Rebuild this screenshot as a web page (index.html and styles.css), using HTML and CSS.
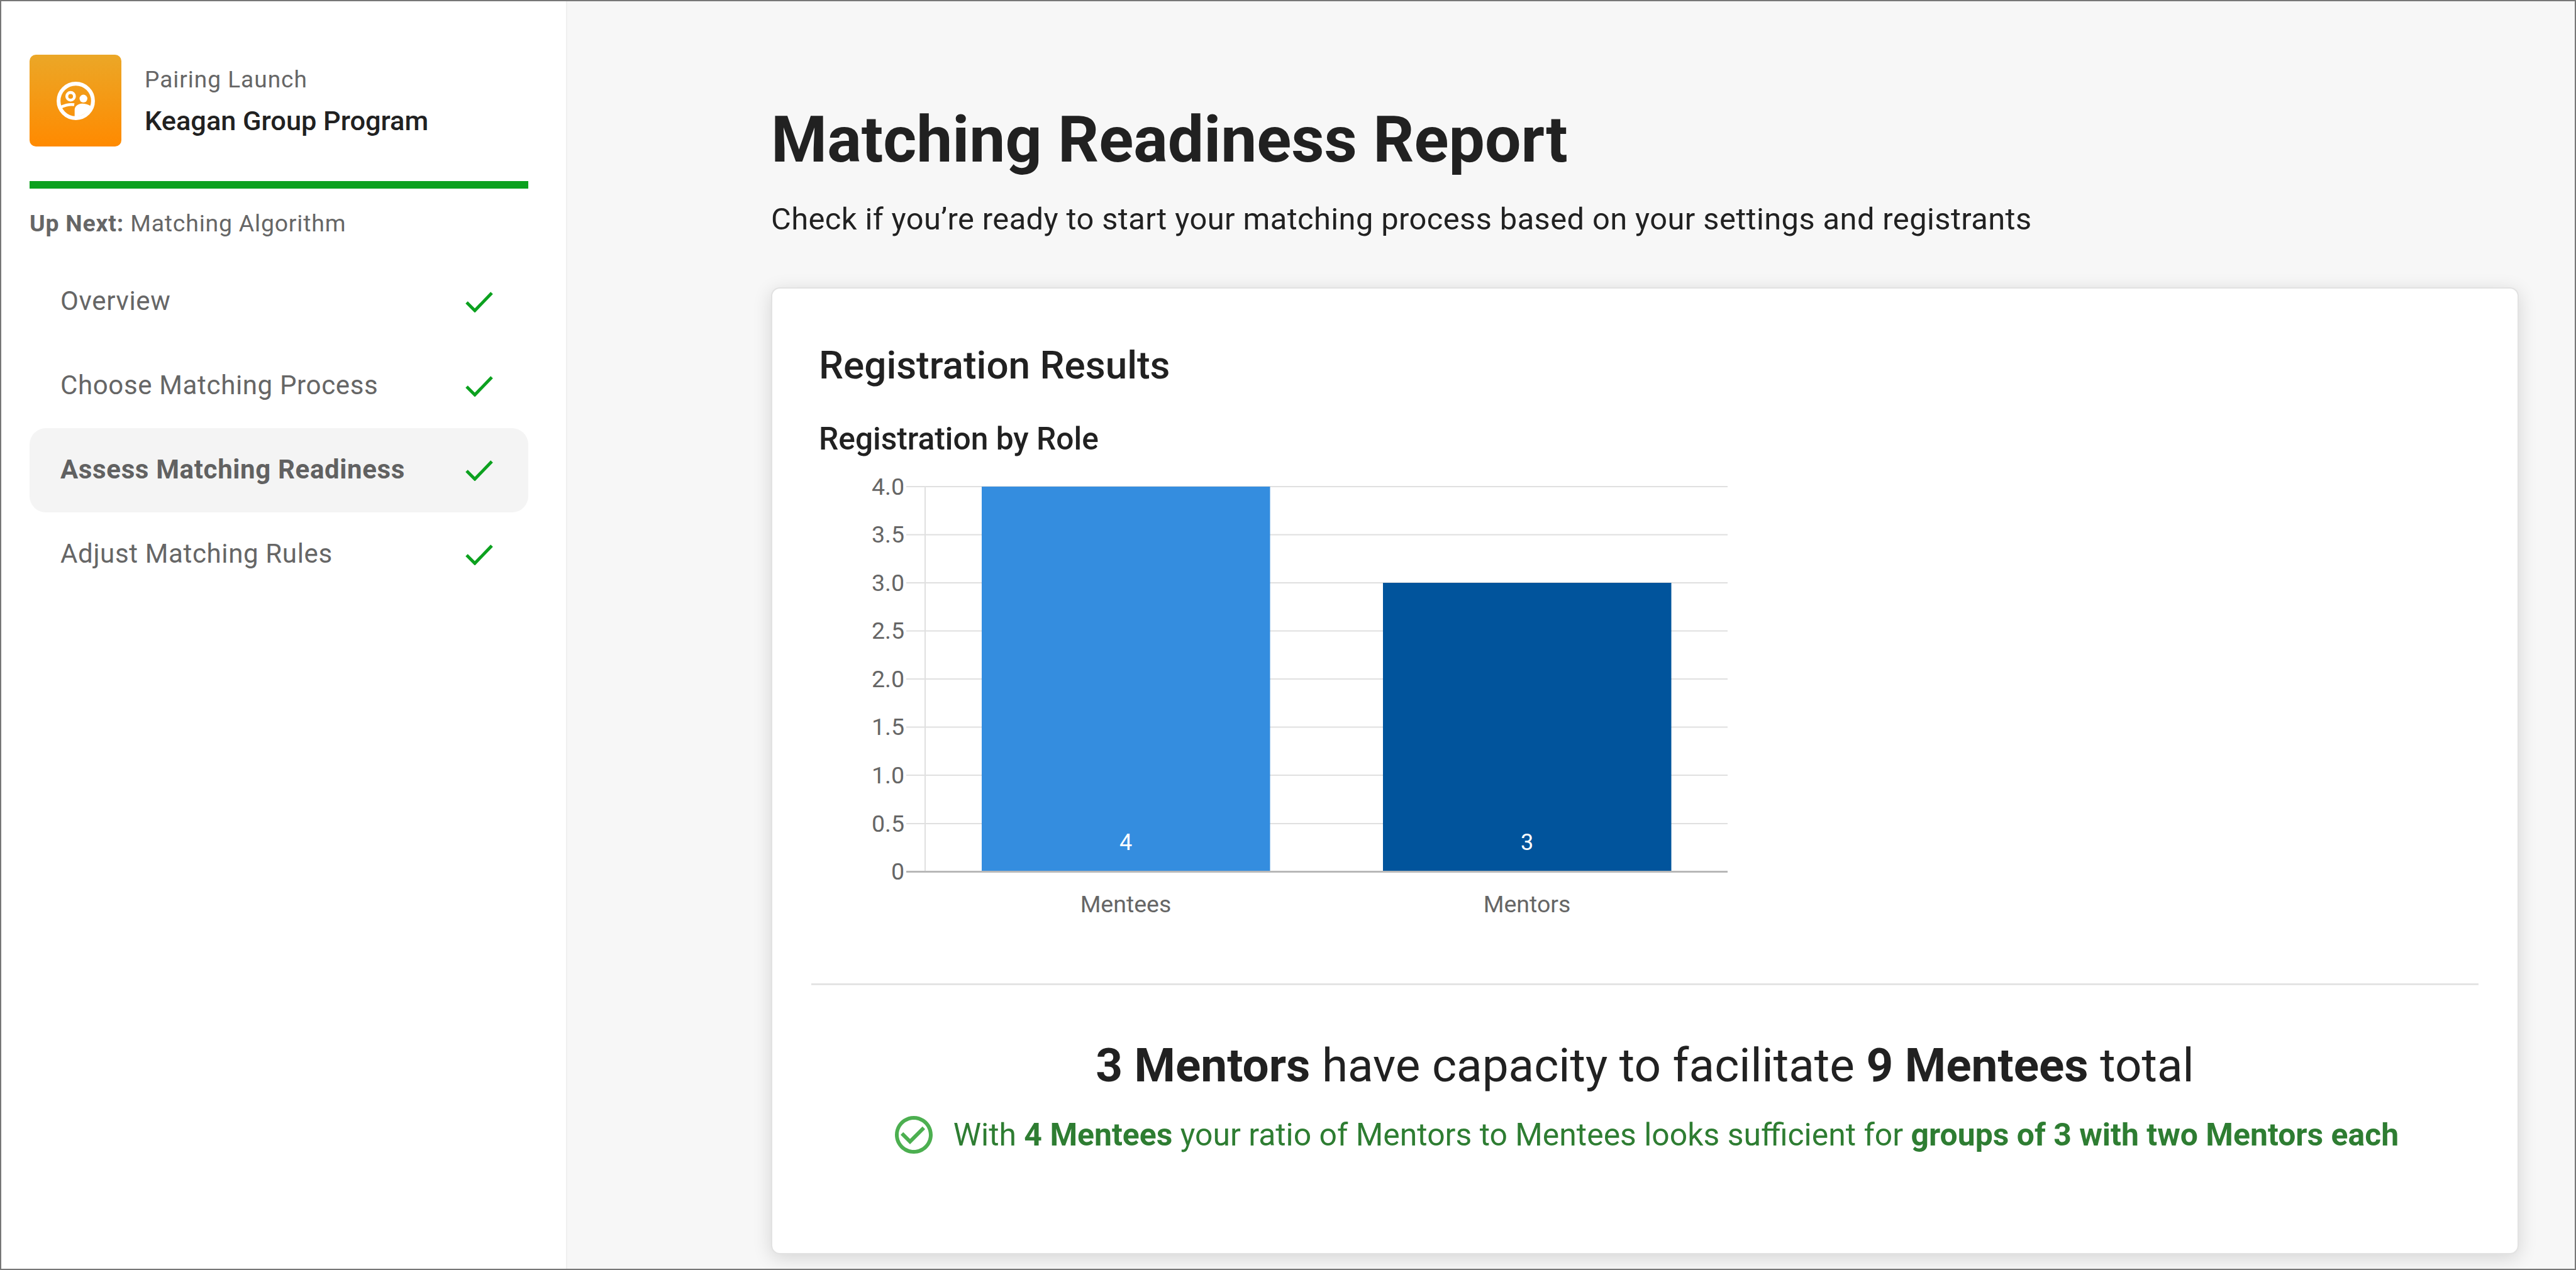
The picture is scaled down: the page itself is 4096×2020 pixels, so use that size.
FILE: index.html
```html
<!DOCTYPE html>
<html lang="en">
<head>
<meta charset="utf-8">
<title>Matching Readiness Report</title>
<link rel="stylesheet" href="styles.css">
</head>
<body>
<div class="app">
  <aside class="sidebar">
    <div class="brand">
      <div class="brand-icon">
        <svg class="brand-glyph" viewBox="0 0 24 24">
          <circle class="g-line" cx="12" cy="12" r="9"/>
          <circle class="g-line-thin" cx="9.3" cy="9.6" r="2"/>
          <circle class="g-fill" cx="16" cy="10.8" r="2.05"/>
          <path class="g-fill" d="M11.4 20.2v-3.6c0-1.500 1.400-3.200 4-3.200 1.300 0 3.200.5 4.400 1.300-1 3-4.400 5.500-8.400 5.500z"/>
          <path class="g-line-thin" d="M3.600 15.600c1.800-1.200 5-2 7.600-1.600"/>
        </svg>
      </div>
      <div class="brand-text">
        <div class="brand-sub">Pairing Launch</div>
        <div class="brand-name">Keagan Group Program</div>
      </div>
    </div>
    <div class="progress"></div>
    <div class="up-next"><strong>Up Next:</strong> Matching Algorithm</div>
    <nav class="nav">
      <div class="nav-item"><span>Overview</span><svg class="check" viewBox="0 0 44 34"><path d="M2 18l13 13L42 3"/></svg></div>
      <div class="nav-item"><span>Choose Matching Process</span><svg class="check" viewBox="0 0 44 34"><path d="M2 18l13 13L42 3"/></svg></div>
      <div class="nav-item active"><span>Assess Matching Readiness</span><svg class="check" viewBox="0 0 44 34"><path d="M2 18l13 13L42 3"/></svg></div>
      <div class="nav-item"><span>Adjust Matching Rules</span><svg class="check" viewBox="0 0 44 34"><path d="M2 18l13 13L42 3"/></svg></div>
    </nav>
  </aside>
  <main class="main">
    <h1 class="title">Matching Readiness Report</h1>
    <p class="subtitle">Check if you’re ready to start your matching process based on your settings and registrants</p>
    <section class="card">
      <h2 class="card-title">Registration Results</h2>
      <h3 class="chart-title">Registration by Role</h3>
      <svg class="chart" viewBox="0 0 1460 740" width="1460" height="740">
        <g class="grid">
          <line x1="140" x2="1446" y1="34" y2="34"/>
          <line x1="140" x2="1446" y1="110.5" y2="110.5"/>
          <line x1="140" x2="1446" y1="187" y2="187"/>
          <line x1="140" x2="1446" y1="263.5" y2="263.5"/>
          <line x1="140" x2="1446" y1="340" y2="340"/>
          <line x1="140" x2="1446" y1="416.5" y2="416.5"/>
          <line x1="140" x2="1446" y1="493" y2="493"/>
          <line x1="140" x2="1446" y1="570" y2="570"/>
          <line x1="170" x2="170" y1="34" y2="646"/>
        </g>
        <rect class="bar-a" x="260" y="34" width="458.500" height="612.500"/>
        <rect class="bar-b" x="898" y="187" width="458.500" height="459.500"/>
        <line class="axis" x1="140" x2="1446" y1="646.500" y2="646.500"/>
        <g class="ytick">
          <text x="137" y="47">4.0</text>
          <text x="137" y="123">3.5</text>
          <text x="137" y="200">3.0</text>
          <text x="137" y="276">2.5</text>
          <text x="137" y="353">2.0</text>
          <text x="137" y="429">1.5</text>
          <text x="137" y="506">1.0</text>
          <text x="137" y="583">0.5</text>
          <text x="137" y="659">0</text>
        </g>
        <g class="xtick">
          <text x="489" y="711">Mentees</text>
          <text x="1127" y="711">Mentors</text>
        </g>
        <g class="val">
          <text x="489" y="612">4</text>
          <text x="1127" y="612">3</text>
        </g>
      </svg>
      <hr class="divider">
      <p class="capacity"><strong>3 Mentors</strong> have capacity to facilitate <strong>9 Mentees</strong> total</p>
      <div class="ratio">
        <svg class="ok" viewBox="0 0 24 24"><path d="M16.59 7.58L10 14.17l-3.59-3.58L5 12l5 5 8-8zM12 2C6.48 2 2 6.48 2 12s4.48 10 10 10 10-4.48 10-10S17.52 2 12 2zm0 18c-4.42 0-8-3.58-8-8s3.58-8 8-8 8 3.58 8 8-3.58 8-8 8z"/></svg>
        <span>With <strong>4 Mentees</strong> your ratio of Mentors to Mentees looks sufficient for <strong>groups of 3 with two Mentors each</strong></span>
      </div>
    </section>
  </main>
</div>
</body>
</html>
```
FILE: styles.css
```css
* { box-sizing: border-box; }
html, body { margin: 0; height: 100%; }
body { font-family: Roboto, "Noto Sans", sans-serif; color: #212121; overflow: hidden; }
.app { display: flex; height: 2020px; width: 4096px; border: 2px solid #777; background: #f7f7f7; overflow: hidden; }

.sidebar { width: 900px; flex: none; background: #fff; border-right: 2px solid #efefef; padding: 85px 60px 0 45px; }
.brand { display: flex; align-items: center; gap: 37px; height: 146px; }
.brand-icon { width: 146px; height: 146px; border-radius: 10px; background: linear-gradient(#eba727, #ff8a00); display: flex; align-items: center; justify-content: center; }
.brand-glyph { width: 73px; height: 73px; }
.g-line { fill: none; stroke: #fff; stroke-width: 2; }
.g-line-thin { fill: none; stroke: #fff; stroke-width: 1.5; }
.g-fill { fill: #fff; }
.brand-text { display: flex; flex-direction: column; gap: 20px; }
.brand-sub { font-size: 37px; line-height: 46px; color: #666; letter-spacing: 1px; }
.brand-name { font-size: 43.300px; line-height: 46px; font-weight: 500; color: #212121; }
.progress { height: 12px; background: #0ca11f; margin-top: 55px; }
.up-next { font-size: 37.400px; line-height: 46px; color: #666; margin-top: 32px; letter-spacing: .8px; }
.up-next strong { font-weight: 700; }
.nav { margin-top: 35px; display: flex; flex-direction: column; }
.nav-item { height: 134px; display: flex; align-items: center; justify-content: space-between; padding: 0 56px 3px 49px; font-size: 42px; color: #666; border-radius: 26px; letter-spacing: .65px; }
.nav-item.active { background: #f4f4f4; font-weight: 700; color: #616161; }
.check { width: 44px; height: 34px; fill: none; stroke: #0ca11f; stroke-width: 5; margin-bottom: -3px; }

.main { flex: 1; padding: 158px 89px 0 324px; min-width: 0; }
.title { margin: 0; font-size: 101.900px; line-height: 124px; font-weight: 700; color: #212121; }
.subtitle { margin: 33px 0 0; font-size: 48.800px; line-height: 64px; color: #212121; letter-spacing: .42px; }
.card { margin-top: 76px; height: 1538px; background: #fff; border: 2px solid #e2e2e2; border-radius: 14px; box-shadow: 0 6px 30px rgba(0, 0, 0, .14); padding: 86px 62px 0; }
.card-title { margin: 0 0 0 12px; font-size: 62px; line-height: 72px; font-weight: 500; color: #212121; }
.chart-title { margin: 50px 0 0 12px; font-size: 49.700px; line-height: 62px; font-weight: 500; color: #212121; }
.chart { display: block; margin: 11px 0 0 11px; }
.grid line { stroke: #e0e0e0; stroke-width: 2; }
.axis { stroke: #b8b8b8; stroke-width: 3; }
.bar-a { fill: #348ddf; }
.bar-b { fill: #01549c; }
.ytick text { font-size: 37.500px; fill: #666; text-anchor: end; }
.xtick text { font-size: 37.500px; fill: #666; text-anchor: middle; }
.val text { font-size: 36px; fill: #fff; text-anchor: middle; }
.divider { border: 0; height: 3px; background: #e4e4e4; margin: 84px 0 0; }
.capacity { margin: 82px 0 0; font-size: 74.700px; line-height: 92px; text-align: center; color: #212121; }
.capacity strong, .ratio strong { font-weight: 700; }
.ratio { margin-top: 28px; display: flex; align-items: center; justify-content: center; gap: 27px; font-size: 49.900px; line-height: 72px; color: #2e7d32; }
.ok { width: 72px; height: 72px; fill: #4caf50; flex: none; }
```
